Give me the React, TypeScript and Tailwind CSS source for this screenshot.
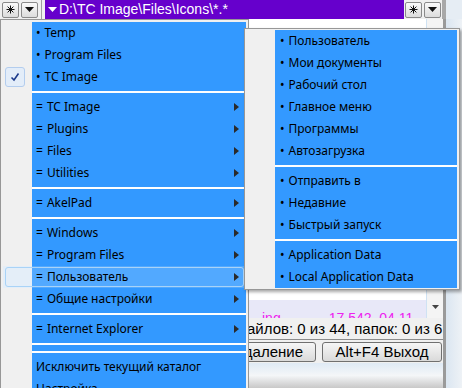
import React from 'react';

type Row =
  | { kind: 'item'; label: string; mark?: string; arrow?: boolean; checked?: boolean; hot?: boolean }
  | { kind: 'sep' };

const mainRows: Row[] = [
  { kind: 'item', mark: '•', label: 'Temp' },
  { kind: 'item', mark: '•', label: 'Program Files' },
  { kind: 'item', mark: '•', label: 'TC Image', checked: true },
  { kind: 'sep' },
  { kind: 'item', mark: '=', label: 'TC Image', arrow: true },
  { kind: 'item', mark: '=', label: 'Plugins', arrow: true },
  { kind: 'item', mark: '=', label: 'Files', arrow: true },
  { kind: 'item', mark: '=', label: 'Utilities', arrow: true },
  { kind: 'sep' },
  { kind: 'item', mark: '=', label: 'AkelPad', arrow: true },
  { kind: 'sep' },
  { kind: 'item', mark: '=', label: 'Windows', arrow: true },
  { kind: 'item', mark: '=', label: 'Program Files', arrow: true },
  { kind: 'item', mark: '=', label: 'Пользователь', arrow: true, hot: true },
  { kind: 'item', mark: '=', label: 'Общие настройки', arrow: true },
  { kind: 'sep' },
  { kind: 'item', mark: '=', label: 'Internet Explorer', arrow: true },
  { kind: 'sep' },
  { kind: 'sep' },
  { kind: 'item', label: 'Исключить текущий каталог' },
  { kind: 'item', label: 'Настройка...' },
];

const subRows: Row[] = [
  { kind: 'item', mark: '•', label: 'Пользователь' },
  { kind: 'item', mark: '•', label: 'Мои документы' },
  { kind: 'item', mark: '•', label: 'Рабочий стол' },
  { kind: 'item', mark: '•', label: 'Главное меню' },
  { kind: 'item', mark: '•', label: 'Программы' },
  { kind: 'item', mark: '•', label: 'Автозагрузка' },
  { kind: 'sep' },
  { kind: 'item', mark: '•', label: 'Отправить в' },
  { kind: 'item', mark: '•', label: 'Недавние' },
  { kind: 'item', mark: '•', label: 'Быстрый запуск' },
  { kind: 'sep' },
  { kind: 'item', mark: '•', label: 'Application Data' },
  { kind: 'item', mark: '•', label: 'Local Application Data' },
];

function Check() {
  return (
    <svg width="10" height="10" viewBox="0 0 10 10">
      <path d="M1.5 5.5 L4 8 L8.5 1.5" fill="none" stroke="#1c3a8c" strokeWidth="1.6" />
    </svg>
  );
}

function Arrow() {
  return (
    <svg width="5" height="8" viewBox="0 0 5 8">
      <polygon points="0,0 5,4 0,8" fill="#2a2a2a" />
    </svg>
  );
}

function MenuRows({ rows, gutter, textPad }: { rows: Row[]; gutter: string; textPad: string }) {
  return (
    <>
      {rows.map((r, i) =>
        r.kind === 'sep' ? (
          <div key={i} className="flex h-[8px]">
            <div className={gutter} />
            <div className="flex flex-1 items-center bg-[#3399ff]">
              <div className="h-[2px] w-full bg-white" />
            </div>
          </div>
        ) : (
          <div key={i} className="relative flex h-[22px]">
            <div className={`${gutter} flex items-center pl-[2px] ${r.hot ? 'bg-[#e4eef8]' : ''}`}>
              {r.checked && (
                <div className="flex h-[20px] w-[20px] items-center justify-center rounded-[3px] border border-[#b3cdee] bg-[#e3edf9]">
                  <Check />
                </div>
              )}
            </div>
            <div className={`flex flex-1 items-center ${r.hot ? 'bg-[#52a9ff]' : 'bg-[#3399ff]'} ${textPad} pr-[7px]`}>
              <span className="flex-1 whitespace-nowrap text-black">
                {r.mark && <span className="mr-[4px]">{r.mark}</span>}
                {r.label}
              </span>
              {r.arrow && <Arrow />}
            </div>
            {r.hot && (
              <div className="pointer-events-none absolute bottom-[1px] left-[2px] right-[2px] top-[1px] rounded-[3px] border border-[#a9d3f7]" />
            )}
          </div>
        )
      )}
    </>
  );
}

function StarButton() {
  return (
    <div className="flex h-[16px] w-[17px] items-center justify-center rounded-[2px] border border-[#8a8a8a] bg-gradient-to-b from-[#fafafa] to-[#dcdcdc]">
      <svg width="9" height="9" viewBox="0 0 9 9">
        <path d="M4.5 0.5 V8.5 M0.5 4.5 H8.5 M1.6 1.6 L7.4 7.4 M7.4 1.6 L1.6 7.4" stroke="#111" strokeWidth="1" />
      </svg>
    </div>
  );
}

function DropButton() {
  return (
    <div className="flex h-[16px] w-[17px] items-center justify-center rounded-[2px] border border-[#8a8a8a] bg-gradient-to-b from-[#fafafa] to-[#dcdcdc]">
      <svg width="9" height="6" viewBox="0 0 9 6">
        <polygon points="0,0 9,0 4.5,5" fill="#111" />
      </svg>
    </div>
  );
}

export default function App() {
  return (
    <div className="relative h-[388px] w-[462px] overflow-hidden bg-[#f0f0f0] font-['Liberation_Sans',sans-serif]">
      {/* top bar */}
      <div className="flex h-[19px]">
        <div className="flex items-center gap-[2px] pl-[2px] pr-[3px]">
          <StarButton />
          <DropButton />
        </div>
        <div className="w-px bg-[#a0a0a0]" />
        <div className="ml-[3px] flex w-[359px] items-center gap-[2px] bg-[#6600cc] pl-[3px] text-[14px] text-white">
          <svg width="9" height="6" viewBox="0 0 9 6">
            <polygon points="0,0 9,0 4.5,5" fill="#fff" />
          </svg>
          <span className="whitespace-nowrap">D:\TC Image\Files\Icons\*.*</span>
        </div>
        <div className="flex items-center gap-[2px] pl-[1px]">
          <StarButton />
          <DropButton />
        </div>
        <div className="ml-[1px] w-[4px] bg-[#a8a8a8]" />
        <div className="flex-1 bg-[#e6edf4]" />
      </div>

      {/* window body */}
      <div className="flex h-[369px]">
        <div className="flex w-[443px] flex-col bg-[#f0f0f0]">
          <div className="flex h-[299px] bg-white">
            <div className="flex flex-1 flex-col">
              <div className="h-[19px] border-b border-[#d8d8d8] bg-white" />
              <div className="flex-1" />
              <div className="flex h-[18px] items-end overflow-hidden bg-[#e8e8f8] pl-[262px] text-[14px] leading-[14px] text-[#ee22ee]">
                <span className="translate-y-[7px] whitespace-nowrap">ing</span>
                <span className="ml-[48px] translate-y-[7px] whitespace-nowrap">17 542&nbsp;&nbsp;04.11</span>
              </div>
            </div>
            <div className="flex w-[17px] flex-col justify-end border-l border-[#cfe2f3] bg-[#f4f4f4]">
              <div className="mb-[3px] flex h-[16px] items-center justify-center">
                <svg width="7" height="4" viewBox="0 0 7 4">
                  <polygon points="0,0 7,0 3.5,4" fill="#444" />
                </svg>
              </div>
            </div>
          </div>
          <div className="flex h-[21px] items-center overflow-hidden whitespace-nowrap pl-[247px] pt-[1px] text-[15px] text-black">
            айлов: 0 из 44, папок: 0 из 6
          </div>
          <div className="h-px bg-[#8c8c8c]" />
          <div className="flex h-[23px] items-center gap-[6px] pl-[180px] pt-[1px]">
            <div className="flex h-[20px] w-[136px] items-center justify-end rounded-[3px] border border-[#707070] bg-gradient-to-b from-[#f6f6f6] to-[#dadada] pr-[12px] text-[15px]">
              F8 Удаление
            </div>
            <div className="flex h-[20px] w-[120px] items-center justify-center rounded-[3px] border border-[#707070] bg-gradient-to-b from-[#f6f6f6] to-[#dadada] text-[15px]">
              Alt+F4 Выход
            </div>
          </div>
          <div className="flex-1 bg-gradient-to-b from-[#dfeaf5] via-[#f4f6f8] to-[#c8c8c8]" />
        </div>
        <div className="w-[3px] bg-[#9a9a9a]" />
        <div className="flex-1 bg-gradient-to-r from-[#dbe6f1] to-[#eef2f6]" />
      </div>

      {/* main popup menu */}
      <div className="absolute left-0 top-[19px] flex w-[249px] flex-col border border-[#979797] bg-[#f0f0f0] p-[2px] font-['Noto_Sans',sans-serif] text-[12px]">
        <MenuRows rows={mainRows} gutter="w-[29px] shrink-0" textPad="pl-[4px]" />
      </div>

      {/* submenu */}
      <div className="absolute left-[244px] top-[28px] flex w-[216px] flex-col border border-[#979797] bg-[#f0f0f0] px-[2px] py-[1px] font-['Noto_Sans',sans-serif] text-[12px] shadow-[2px_2px_3px_rgba(0,0,0,0.35)]">
        <MenuRows rows={subRows} gutter="w-[28px] shrink-0" textPad="pl-[5px]" />
      </div>
    </div>
  );
}
